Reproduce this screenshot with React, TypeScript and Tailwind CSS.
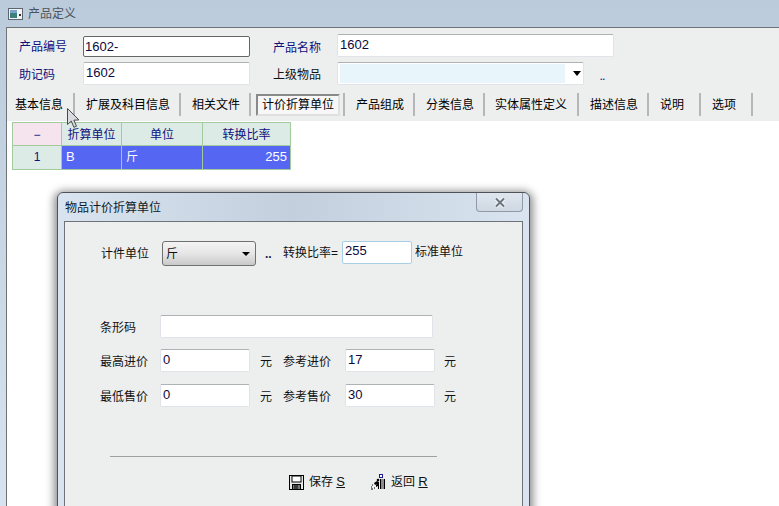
const font = { fontFamily: '"Liberation Sans","Noto Sans CJK SC",sans-serif' }

const tabs = [
  { label: "基本信息", w: "w-[68px]", pl: "pl-[8px]" },
  { label: "扩展及科目信息", w: "w-[106px]", pl: "pl-[11px]" },
  { label: "相关文件", w: "w-[70px]", pl: "pl-[11px]" },
  { label: "计价折算单位", w: "w-[94px]", active: true },
  { label: "产品组成", w: "w-[70px]", pl: "pl-[11px]" },
  { label: "分类信息", w: "w-[70px]", pl: "pl-[11px]" },
  { label: "实体属性定义", w: "w-[94px]", pl: "pl-[10px]" },
  { label: "描述信息", w: "w-[70px]", pl: "pl-[11px]" },
  { label: "说明", w: "w-[52px]", pl: "pl-[11px]" },
  { label: "选项", w: "w-[52px]", pl: "pl-[11px]" },
]

function Field({ value, className, dark }: { value: string; className: string; dark?: boolean }) {
  return (
    <div
      className={
        "flex items-start bg-white rounded-[2px] pt-[2px] text-[13px] leading-[16px] text-[#0a0a3c] border " +
        (dark ? "pl-[1px] border-[#666666] " : "pl-[2px] border-[#e0e3e8] border-t-[#adb2b5] ") +
        className
      }
    >
      {value}
    </div>
  )
}

function FloppyIcon() {
  return (
    <svg width="15" height="15" viewBox="0 0 15 15" className="shrink-0">
      <rect x="0.5" y="0.5" width="14" height="14" fill="#e8e8e8" stroke="#000" />
      <rect x="3" y="1" width="9" height="6" fill="#fff" stroke="#000" strokeWidth="1" />
      <rect x="3.5" y="9.5" width="8" height="5" fill="#777" stroke="#000" />
      <path d="M6 10v4M8 10v4" stroke="#000" />
    </svg>
  )
}

function ExitIcon() {
  return (
    <svg width="15" height="16" viewBox="0 0 15 16" className="shrink-0">
      <rect x="8.5" y="0.5" width="3" height="3" fill="#fff" stroke="#1a1a8c" />
      <rect x="9" y="5" width="5" height="10" fill="#8d8d8d" />
      <path d="M13.5 5v10" stroke="#000" />
      <path d="M9 5h1v10H9z" fill="#000" />
      <circle cx="7" cy="6" r="1.3" fill="#000" />
      <path d="M3 9l3-2 2 1v7H7v-3l-2 1v-2l1-1-2 1z" fill="#000" />
      <path d="M0 13h1M1 11h1M3 14h1M0 15h2" stroke="#000" />
    </svg>
  )
}

function Cursor() {
  return (
    <svg width="14" height="21" viewBox="0 0 14 21" className="absolute left-[67px] top-[108px]">
      <path d="M0.5 0.5v16l3.8-3.4 2.6 6.2 2.6-1.1-2.6-6 5-.3z" fill="#d8dbdf" stroke="#4a4a4a" />
    </svg>
  )
}

function Dialog() {
  return (
    <div className="absolute left-[57px] top-[192px] w-[473px] h-[330px] rounded-t-[6px] border border-[#4d5358] bg-gradient-to-r from-[#d9e4f0] via-[#c3cfdd] to-[#d9e4f0] shadow-[0_2px_8px_3px_rgba(0,0,0,0.45)] px-[6px]">
      <div className="flex h-[28px] items-start justify-between">
        <span className="pl-[1px] pt-[7px] text-[12px] leading-[16px] text-[#0c1b2a]">物品计价折算单位</span>
        <div className="flex h-[19px] w-[47px] items-center justify-center rounded-b-[4px] border border-t-0 border-[#8f9aa6] bg-gradient-to-b from-[#dfe6ee] to-[#cfd8e3]">
          <svg width="12" height="11" viewBox="0 0 12 11">
            <path d="M2 1.5l8 8M10 1.5l-8 8" stroke="#f4f6f8" strokeWidth="4" />
            <path d="M2 1.5l8 8M10 1.5l-8 8" stroke="#6c7680" strokeWidth="2" />
          </svg>
        </div>
      </div>
      <div className="h-[300px] border border-[#6e7378] bg-[#edefef] text-[12px] text-[#111]">
        <div className="flex h-[43px] items-start pt-[19px]">
          <span className="ml-[36px] w-[61px] pt-[5px] leading-[16px]">计件单位</span>
          <div className="flex h-[25px] w-[94px] items-center justify-between rounded-[3px] border border-[#707070] bg-gradient-to-b from-[#f4f4f4] via-[#e6e6e6] to-[#c9c9c9] pl-[3px] pr-[5px]">
            <span>斤</span>
            <span className="h-0 w-0 border-x-[4px] border-t-[4px] border-x-transparent border-t-black" />
          </div>
          <span className="ml-[9px] w-[18px] pt-[5px] font-bold leading-[16px] text-[#1a1a4c]">..</span>
          <span className="w-[59px] pt-[4px] leading-[16px]">转换比率=</span>
          <div className="flex h-[23px] w-[70px] rounded-[2px] border border-[#a9cfe6] bg-white pl-[2px] pt-[1px] text-[13px] leading-[16px] text-[#0a0a3c]">
            255
          </div>
          <span className="ml-[3px] pt-[3px] leading-[16px]">标准单位</span>
        </div>

        <div className="mt-[50px] flex h-[23px] items-center">
          <span className="ml-[35px] mt-[2px] w-[60px]">条形码</span>
          <Field value="" className="h-[23px] w-[273px]" />
        </div>

        <div className="mt-[11px] flex h-[23px] items-center">
          <span className="ml-[35px] mt-[2px] w-[60px]">最高进价</span>
          <Field value="0" className="h-[23px] w-[90px]" />
          <span className="ml-[10px] mt-[2px] w-[23px]">元</span>
          <span className="mt-[2px] w-[62px]">参考进价</span>
          <Field value="17" className="h-[23px] w-[90px]" />
          <span className="ml-[9px] mt-[2px]">元</span>
        </div>

        <div className="mt-[12px] flex h-[23px] items-center">
          <span className="ml-[35px] mt-[2px] w-[60px]">最低售价</span>
          <Field value="0" className="h-[23px] w-[90px]" />
          <span className="ml-[10px] mt-[2px] w-[23px]">元</span>
          <span className="mt-[2px] w-[62px]">参考售价</span>
          <Field value="30" className="h-[23px] w-[90px]" />
          <span className="ml-[9px] mt-[2px]">元</span>
        </div>

        <div className="ml-[45px] mt-[49px] h-px w-[327px] bg-[#a0a0a0]" />

        <div className="ml-[224px] mt-[17px] flex h-[16px] items-center">
          <div className="flex w-[82px] items-center gap-[5px]">
            <FloppyIcon />
            <span>
              保存 <span className="text-[13px] underline">S</span>
            </span>
          </div>
          <div className="flex items-center gap-[5px]">
            <ExitIcon />
            <span>
              返回 <span className="text-[13px] underline">R</span>
            </span>
          </div>
        </div>
      </div>
    </div>
  )
}

export default function App() {
  return (
    <div className="relative h-[506px] w-[779px] overflow-hidden bg-gradient-to-b from-[#bbcbdb] to-[#d7e3f0]" style={font}>
      <div className="flex h-[27px] items-center pl-[8px] pt-[1px]">
        <svg width="15" height="12" viewBox="0 0 15 12" className="mr-[5px]">
          <rect x="0.5" y="0.5" width="14" height="11" fill="#f2f2f2" stroke="#5c6670" />
          <rect x="2" y="2" width="7" height="8" fill="#3d7f7a" />
          <rect x="2" y="2" width="7" height="3" fill="#7aa3c9" />
          <rect x="11" y="6" width="2" height="2" fill="#333" />
        </svg>
        <span className="text-[12px] text-[#4a5560]">产品定义</span>
      </div>

      <div className="ml-[6px] h-[479px] border-l border-t border-[#6f7377] bg-white">
        <div className="h-[93px] bg-[#edefef] text-[12px]">
          <div className="flex h-[29px] items-end">
            <span className="ml-[12px] w-[64px] pb-[2px] leading-[16px] text-[#10107c]">产品编号</span>
            <Field value="1602-" dark className="h-[21px] w-[167px]" />
            <span className="ml-[23px] w-[64px] pb-[1px] leading-[16px] text-[#10107c]">产品名称</span>
            <Field value="1602" className="h-[23px] w-[277px]" />
          </div>
          <div className="mt-[5px] flex h-[23px] items-center">
            <span className="ml-[12px] mt-[3px] w-[64px] text-[#10107c]">助记码</span>
            <Field value="1602" className="h-[23px] w-[167px]" />
            <span className="ml-[23px] mt-[2px] w-[64px] text-[#111]">上级物品</span>
            <div className="flex h-[23px] w-[247px] items-center rounded-[2px] border border-[#e0e3e8] border-t-[#adb2b5] bg-white pl-[2px]">
              <div className="h-[19px] w-[225px] bg-[#e8f6fb]" />
              <span className="ml-[8px] h-0 w-0 border-x-[4px] border-t-[5px] border-x-transparent border-t-black" />
            </div>
            <span className="ml-[16px] mt-[9px] text-[9px] font-bold text-[#1a1a8c]">..</span>
          </div>
          <div className="mt-[8px] flex h-[23px] items-center">
            {tabs.map((t) => (
              <div key={t.label} className={"flex h-[23px] shrink-0 items-center border-r-2 border-[#b4b6b8] " + t.w + " " + (t.pl ?? "")}>
                {t.active ? (
                  <div className="ml-[5px] flex h-[22px] w-[84px] items-center justify-center border-2 border-[#8a8a8a] border-b-[#e0e0e0] border-r-[#e0e0e0] bg-[#f7f7f7]">
                    {t.label}
                  </div>
                ) : (
                  t.label
                )}
              </div>
            ))}
          </div>
        </div>

        <div className="ml-[5px] mt-px grid w-[279px] grid-cols-[49px_60px_81px_88px] border-l border-t border-[#a3cb9e] text-[12px] leading-[22px]">
          <div className="h-[23px] border-b border-r border-[#a3cb9e] bg-[#f5e4ee] text-center leading-[24px] text-[#10107c]">−</div>
          <div className="h-[23px] border-b border-r border-[#a3cb9e] bg-[#dcebe5] text-center leading-[24px] text-[#10107c]">折算单位</div>
          <div className="h-[23px] border-b border-r border-[#a3cb9e] bg-[#dcebe5] text-center leading-[24px] text-[#10107c]">单位</div>
          <div className="h-[23px] border-b border-r border-[#a3cb9e] bg-[#dcebe5] text-center leading-[24px] text-[#10107c]">转换比率</div>
          <div className="h-[24px] border-b border-r border-[#a3cb9e] bg-[#dcebe5] text-center text-[#10107c]">1</div>
          <div className="h-[24px] border-b border-r border-[#a3cb9e] bg-[#5566f2] pl-[4px] text-[13px] text-white">B</div>
          <div className="h-[24px] border-b border-r border-[#a3cb9e] bg-[#5566f2] pl-[4px] text-white">斤</div>
          <div className="h-[24px] border-b border-r border-[#a3cb9e] bg-[#5566f2] pr-[3px] text-right text-[13px] text-white">255</div>
        </div>
      </div>

      <Dialog />
      <Cursor />
    </div>
  )
}
